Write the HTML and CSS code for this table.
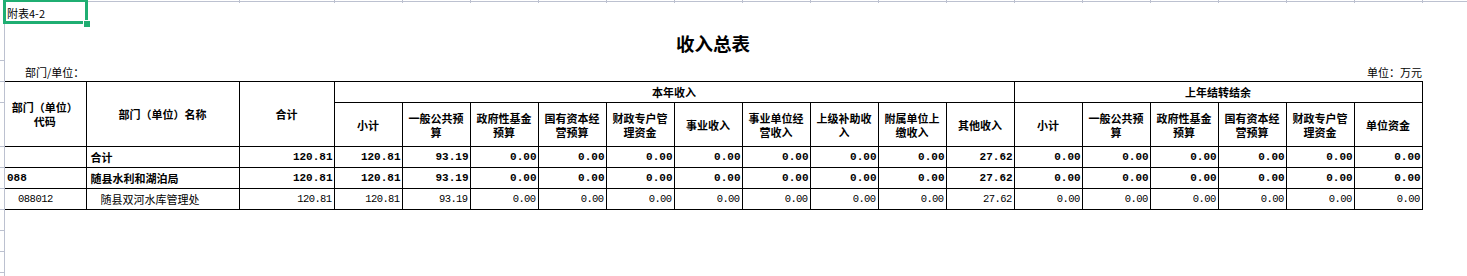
FILE: index.html
```html
<!DOCTYPE html>
<html lang="zh-CN">
<head>
<meta charset="utf-8">
<title>收入总表</title>
<link rel="stylesheet" href="styles.css">
</head>
<body>
<div class="sheet">
  <svg class="grid" width="1467" height="276" viewBox="0 0 1467 276">
    <line x1="4" y1="1.5" x2="1467" y2="1.5"/>
    <line x1="4.5" y1="0" x2="4.5" y2="276"/>
    <g class="ticks">
      <line x1="239.5" y1="0" x2="239.5" y2="3"/>
      <line x1="334.5" y1="0" x2="334.5" y2="3"/>
      <line x1="402.5" y1="0" x2="402.5" y2="3"/>
      <line x1="470.5" y1="0" x2="470.5" y2="3"/>
      <line x1="538.5" y1="0" x2="538.5" y2="3"/>
      <line x1="606.5" y1="0" x2="606.5" y2="3"/>
      <line x1="674.5" y1="0" x2="674.5" y2="3"/>
      <line x1="742.5" y1="0" x2="742.5" y2="3"/>
      <line x1="810.5" y1="0" x2="810.5" y2="3"/>
      <line x1="878.5" y1="0" x2="878.5" y2="3"/>
      <line x1="946.5" y1="0" x2="946.5" y2="3"/>
      <line x1="1014.5" y1="0" x2="1014.5" y2="3"/>
      <line x1="1082.5" y1="0" x2="1082.5" y2="3"/>
      <line x1="1150.5" y1="0" x2="1150.5" y2="3"/>
      <line x1="1218.5" y1="0" x2="1218.5" y2="3"/>
      <line x1="1286.5" y1="0" x2="1286.5" y2="3"/>
      <line x1="1354.5" y1="0" x2="1354.5" y2="3"/>
      <line x1="1422.5" y1="0" x2="1422.5" y2="3"/>
      <line x1="0" y1="60.5" x2="4" y2="60.5"/>
      <line x1="0" y1="81.5" x2="4" y2="81.5"/>
      <line x1="0" y1="102.5" x2="4" y2="102.5"/>
      <line x1="0" y1="146.5" x2="4" y2="146.5"/>
      <line x1="0" y1="167.5" x2="4" y2="167.5"/>
      <line x1="0" y1="188.5" x2="4" y2="188.5"/>
      <line x1="0" y1="209.5" x2="4" y2="209.5"/>
      <line x1="0" y1="230.5" x2="4" y2="230.5"/>
      <line x1="0" y1="251.5" x2="4" y2="251.5"/>
      <line x1="0" y1="272.5" x2="4" y2="272.5"/>
    </g>
  </svg>

  <div class="row-top">
    <span class="cell-a1">附表4-2</span>
    <div class="sel"><span class="handle"></span></div>
  </div>

  <div class="title-row"><h1 class="title">收入总表</h1></div>

  <div class="unit-row">
    <span>部门/单位：</span>
    <span>单位：万元</span>
  </div>

  <table class="report">
    <colgroup>
      <col class="c-code"><col class="c-name"><col class="c-total">
      <col class="c-n"><col class="c-n"><col class="c-n"><col class="c-n"><col class="c-n">
      <col class="c-n"><col class="c-n"><col class="c-n"><col class="c-n"><col class="c-n">
      <col class="c-n"><col class="c-n"><col class="c-n"><col class="c-n"><col class="c-n"><col class="c-n">
    </colgroup>
    <thead>
      <tr class="h1">
        <th rowspan="2" class="first">部门（单位）<br>代码</th>
        <th rowspan="2">部门（单位）名称</th>
        <th rowspan="2">合计</th>
        <th colspan="10">本年收入</th>
        <th colspan="6">上年结转结余</th>
      </tr>
      <tr class="h2">
        <th>小计</th>
        <th>一般公共预<br>算</th>
        <th>政府性基金<br>预算</th>
        <th>国有资本经<br>营预算</th>
        <th>财政专户管<br>理资金</th>
        <th>事业收入</th>
        <th>事业单位经<br>营收入</th>
        <th>上级补助收<br>入</th>
        <th>附属单位上<br>缴收入</th>
        <th>其他收入</th>
        <th>小计</th>
        <th>一般公共预<br>算</th>
        <th>政府性基金<br>预算</th>
        <th>国有资本经<br>营预算</th>
        <th>财政专户管<br>理资金</th>
        <th>单位资金</th>
      </tr>
    </thead>
    <tbody>
      <tr class="d b">
        <td class="first code"></td>
        <td class="name">合计</td>
        <td class="num">120.81</td>
        <td class="num">120.81</td><td class="num">93.19</td><td class="num">0.00</td><td class="num">0.00</td><td class="num">0.00</td>
        <td class="num">0.00</td><td class="num">0.00</td><td class="num">0.00</td><td class="num">0.00</td><td class="num">27.62</td>
        <td class="num">0.00</td><td class="num">0.00</td><td class="num">0.00</td><td class="num">0.00</td><td class="num">0.00</td><td class="num">0.00</td>
      </tr>
      <tr class="d b">
        <td class="first code">088</td>
        <td class="name">随县水利和湖泊局</td>
        <td class="num">120.81</td>
        <td class="num">120.81</td><td class="num">93.19</td><td class="num">0.00</td><td class="num">0.00</td><td class="num">0.00</td>
        <td class="num">0.00</td><td class="num">0.00</td><td class="num">0.00</td><td class="num">0.00</td><td class="num">27.62</td>
        <td class="num">0.00</td><td class="num">0.00</td><td class="num">0.00</td><td class="num">0.00</td><td class="num">0.00</td><td class="num">0.00</td>
      </tr>
      <tr class="d sub">
        <td class="first code">088012</td>
        <td class="name">随县双河水库管理处</td>
        <td class="num">120.81</td>
        <td class="num">120.81</td><td class="num">93.19</td><td class="num">0.00</td><td class="num">0.00</td><td class="num">0.00</td>
        <td class="num">0.00</td><td class="num">0.00</td><td class="num">0.00</td><td class="num">0.00</td><td class="num">27.62</td>
        <td class="num">0.00</td><td class="num">0.00</td><td class="num">0.00</td><td class="num">0.00</td><td class="num">0.00</td><td class="num">0.00</td>
      </tr>
    </tbody>
  </table>
</div>
</body>
</html>
```

FILE: styles.css
```css
html, body {
  margin: 0;
  padding: 0;
  background: #fff;
}

body {
  font-family: "Noto Sans CJK SC", "Noto Sans", sans-serif;
  color: #000;
  font-size: 11px;
}

.sheet {
  position: relative;
  width: 1467px;
  height: 276px;
  overflow: hidden;
}

.grid {
  position: absolute;
  left: 0;
  top: 0;
  pointer-events: none;
}

.grid line {
  stroke: #bcc1d0;
  stroke-width: 1;
}

.row-top {
  position: relative;
  height: 22px;
  display: flex;
  align-items: center;
  padding-left: 7px;
}

.cell-a1 {
  font-size: 11px;
  line-height: 14px;
  padding-top: 4px;
}

.sel {
  position: absolute;
  left: 3px;
  top: -1px;
  width: 79px;
  height: 19px;
  border: 3px solid #1fae72;
}

.handle {
  position: absolute;
  right: -6px;
  bottom: -7px;
  width: 6px;
  height: 6px;
  background: #1fae72;
  border: 1px solid #fff;
}

.title-row {
  height: 38px;
  width: 1418px;
  margin-left: 4px;
  display: flex;
  justify-content: center;
  align-items: center;
  padding-top: 4px;
  box-sizing: border-box;
}

.title {
  margin: 0;
  font-size: 18.5px;
  font-weight: 700;
  line-height: 20px;
}

.unit-row {
  height: 21px;
  width: 1418px;
  margin-left: 4px;
  display: flex;
  justify-content: space-between;
  align-items: flex-end;
  padding: 0 0 2px 21px;
  box-sizing: border-box;
  font-size: 11px;
  line-height: 14px;
}

.report {
  border-collapse: collapse;
  table-layout: fixed;
  width: 1418px;
  margin-left: 4px;
}

.c-code { width: 82px; }
.c-name { width: 153px; }
.c-total { width: 95px; }
.c-n { width: 68px; }

.report th,
.report td {
  border: 1px solid #000;
  padding: 0 2px;
  font-size: 11px;
  line-height: 14px;
  white-space: nowrap;
  overflow: hidden;
}

.report .first {
  border-left: none;
}

.report th {
  font-weight: 700;
  text-align: center;
  vertical-align: middle;
}

.h1 { height: 21px; }
.h2 { height: 44px; }
.d { height: 21px; }

.report td.num {
  text-align: right;
  font-family: "Liberation Mono", "DejaVu Sans Mono", monospace;
  font-size: 10.5px;
  letter-spacing: -0.6px;
  padding-right: 2px;
}

.b td {
  font-weight: 700;
}

.b td.num {
  font-size: 11px;
  letter-spacing: 0;
  padding-right: 1px;
}

.b td.code {
  padding-left: 3px;
  font-family: "Liberation Mono", "DejaVu Sans Mono", monospace;
  font-size: 11px;
}

.b td.name {
  padding-left: 4px;
}

.sub td.code {
  padding-left: 14px;
  font-family: "Liberation Mono", "DejaVu Sans Mono", monospace;
  font-size: 10.5px;
  letter-spacing: -0.5px;
}

.sub td.name {
  padding-left: 14px;
}
```
